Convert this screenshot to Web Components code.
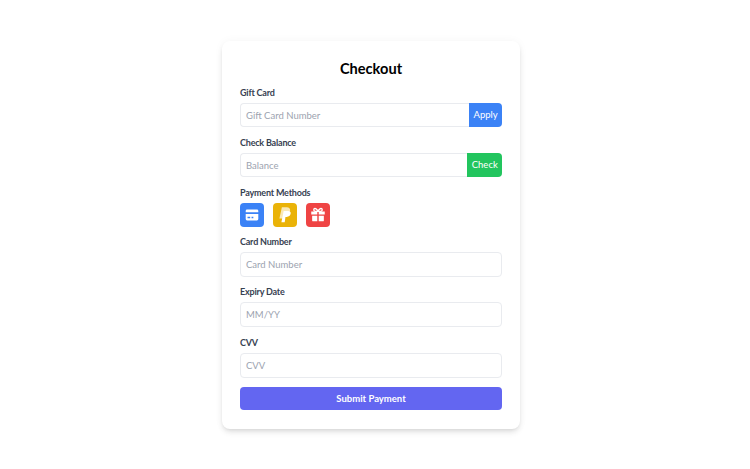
<!DOCTYPE html>
<html><head><meta charset="utf-8"><style>
html,body{margin:0;height:100%;background:#fff;font-family:Lato,"Noto Sans",sans-serif}
body{display:flex;justify-content:center;align-items:flex-start;padding:41px 8px 0 0;box-sizing:border-box}
</style></head><body>
<checkout-card>
<form-field label="Gift Card"><input-group placeholder="Gift Card Number" action="Apply" color="#3b82f6"></input-group></form-field>
<form-field label="Check Balance"><input-group placeholder="Balance" action="Check" color="#22c55e"></input-group></form-field>
<form-field label="Payment Methods"><payment-methods></payment-methods></form-field>
<form-field label="Card Number" class="t"><text-box placeholder="Card Number"></text-box></form-field>
<form-field label="Expiry Date" class="t"><text-box placeholder="MM/YY"></text-box></form-field>
<form-field label="CVV" class="t"><text-box placeholder="CVV"></text-box></form-field>
<submit-button>Submit Payment</submit-button>
</checkout-card>
<script>
function def(name, html){
  customElements.define(name, class extends HTMLElement{
    connectedCallback(){
      if(this.shadowRoot) return;
      const r=this.attachShadow({mode:'open'});
      r.innerHTML=typeof html==='function'?html(this):html;
    }
  });
}
def('checkout-card',`<style>
:host{display:block;box-sizing:border-box;width:298px;height:388px;background:#fff;border-radius:8px;padding:16px 18px;box-shadow:0 4px 6px -1px rgba(0,0,0,.1),0 2px 4px -2px rgba(0,0,0,.1),0 0 10px rgba(0,0,0,.04)}
h1{margin:0 0 4px;font-size:14.600px;line-height:24px;font-weight:700;text-align:center;color:#000}
</style><h1>Checkout</h1><slot></slot>`);
def('form-field',h=>`<style>
:host{display:block;margin-bottom:8px}
:host(.t){margin-bottom:7.400px}
label{display:block;font-size:9px;letter-spacing:-.2px;line-height:14px;font-weight:700;color:#374151;padding-top:1px;margin-bottom:3px}
</style><label>${h.getAttribute('label')}</label><slot></slot>`);
def('input-group',h=>`<style>
:host{display:flex;height:24px}
.i{flex:1;box-sizing:border-box;border:1px solid #e9ebef;border-right:0;border-radius:4px 0 0 4px;padding:0 5px;font-size:9.500px;line-height:23px;color:#9ca3af}
.b{background:${h.getAttribute('color')};color:#fff;font-size:9.500px;line-height:24px;padding:0 4.250px;border-radius:0 4px 4px 0}
</style><div class="i">${h.getAttribute('placeholder')}</div><div class="b">${h.getAttribute('action')}</div>`);
def('text-box',h=>`<style>
:host{display:block;box-sizing:border-box;height:25px;border:1px solid #e9ebef;border-radius:4px;padding:0 5px;font-size:9.500px;line-height:24px;color:#9ca3af}
</style>${h.getAttribute('placeholder')}`);
def('payment-methods',`<style>
:host{display:flex;gap:9px;height:23px}
.t{display:flex;width:24px;height:24px;border-radius:4px;align-items:center;justify-content:center}
svg{width:18px;height:18px;fill:#fff;display:block}
</style>
<div class="t" style="background:#3b82f6"><svg viewBox="0 0 20 20"><path d="M3 5.500A1.500 1.500 0 0 1 4.500 4h11A1.500 1.500 0 0 1 17 5.500V7H3z"/><path fill-rule="evenodd" d="M3 9h14v5.500a1.500 1.500 0 0 1-1.500 1.500h-11A1.500 1.500 0 0 1 3 14.500zM5 12v1.500h3V12zm4.500 0v1.500h2V12z"/></svg></div>
<div class="t" style="background:#eab308"><svg viewBox="0 0 20 20"><path d="M6.500 1.500h5.500c2.600 0 4 1.400 3.700 3.600-.3 2.700-2.300 4.200-5 4.200H8.700L8 14H3.800z" opacity=".7"/><path d="M8.500 5.500h5c2 0 3.100 1 2.800 2.900-.4 2.400-2.100 3.700-4.400 3.700h-1.400l-.8 5.900H6z"/></svg></div>
<div class="t" style="background:#ef4444"><svg viewBox="0 0 20 20"><path d="M2.500 6h6.700v3.500H2.500zM10.800 6h6.700v3.500h-6.700zM3.500 10.800h5.700V17H4.500a1 1 0 0 1-1-1zM10.800 10.800h5.700V16a1 1 0 0 1-1 1h-4.700z"/><path fill="none" stroke="#fff" stroke-width="1.500" d="M10 6C8.500 3 7 2.500 6 3s-1 2.500 1 3zM10 6c1.500-3 3-3.500 4-3s1 2.500-1 3z"/></svg></div>`);
def('submit-button',`<style>
:host{display:block;height:23px;border-radius:4px;background:#6366f1;color:#fff;font-size:9.500px;font-weight:700;line-height:23px;text-align:center;margin-top:9px}
</style><slot></slot>`);
</script>
</body></html>
